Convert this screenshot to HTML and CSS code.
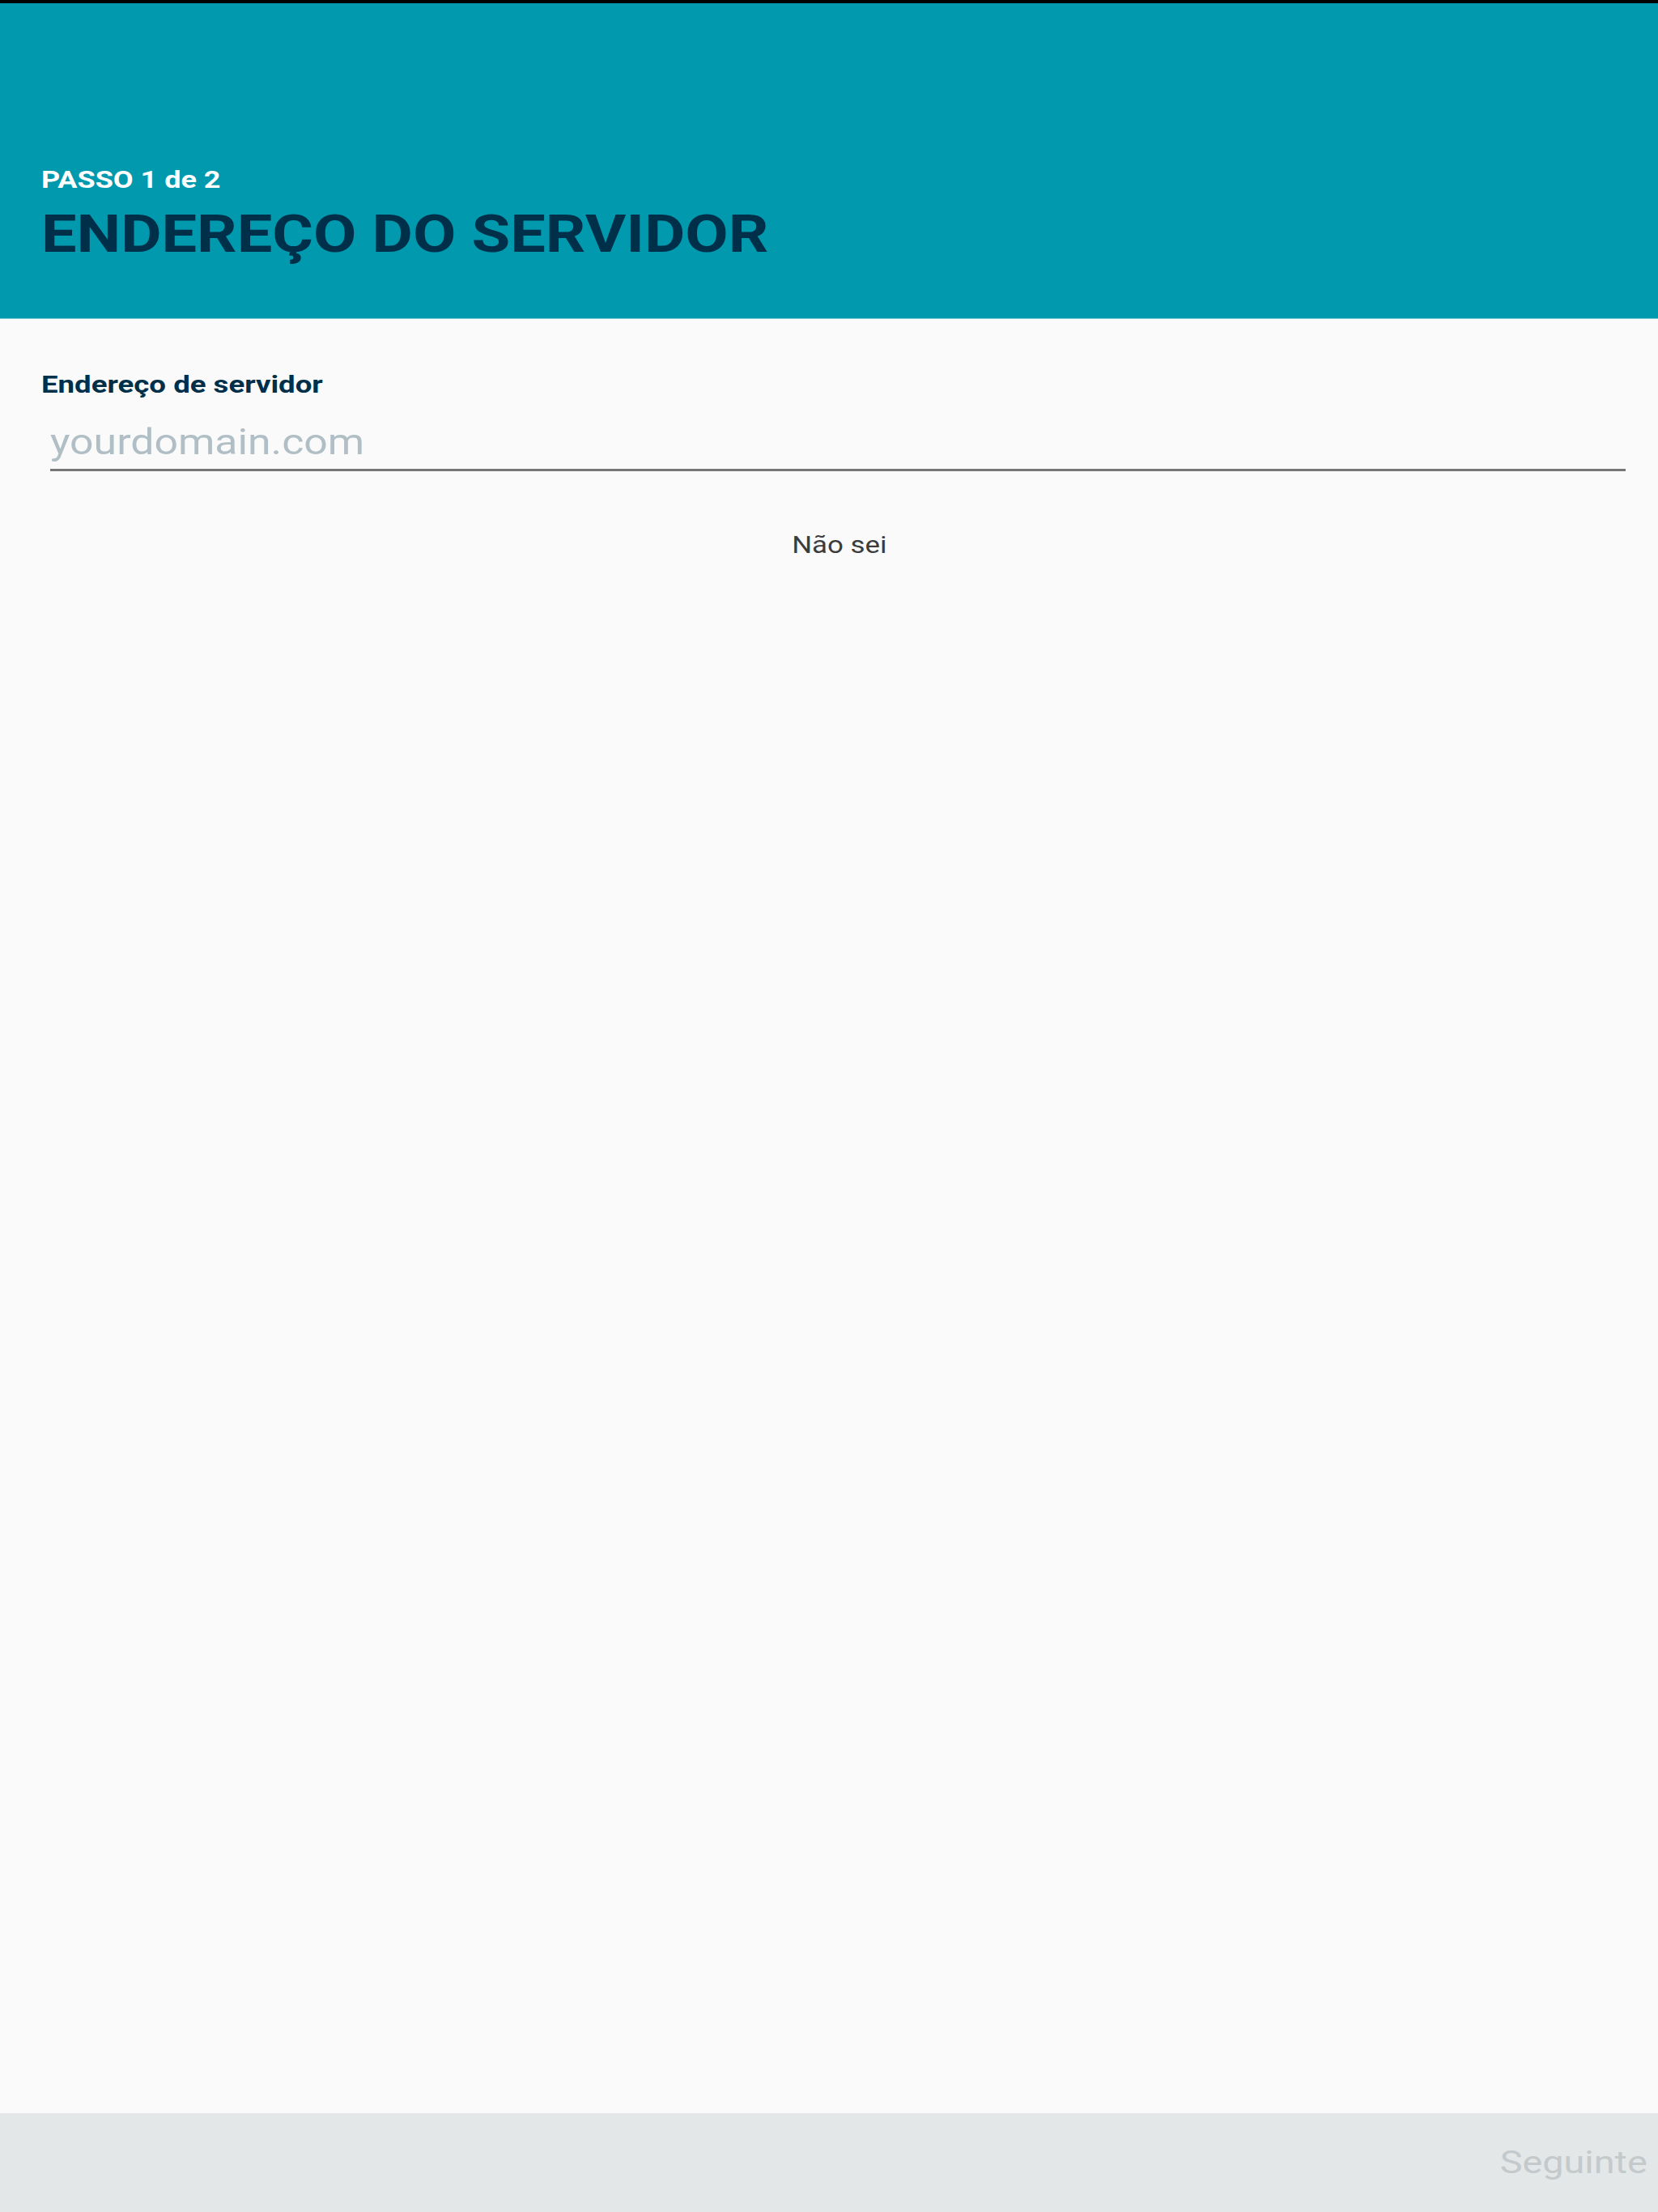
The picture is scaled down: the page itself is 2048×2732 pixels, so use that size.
FILE: index.html
```html
<!DOCTYPE html>
<html lang="pt">
<head>
<meta charset="utf-8">
<title>Endereço do servidor</title>
<link rel="stylesheet" href="styles.css">
</head>
<body>
<div class="screen">
  <header class="header">
    <div class="step"><span class="wide">PASSO 1 de 2</span></div>
    <h1 class="title"><span class="wide">ENDEREÇO DO SERVIDOR</span></h1>
  </header>
  <main class="content">
    <label class="label" for="server"><span class="wide">Endereço de servidor</span></label>
    <div class="field">
      <input id="server" class="input" type="text" placeholder="yourdomain.com">
    </div>
    <div class="help"><span class="wide center">Não sei</span></div>
  </main>
  <footer class="footer">
    <span class="next wide right">Seguinte</span>
  </footer>
</div>
</body>
</html>
```
FILE: styles.css
```css
html, body {
  margin: 0;
  padding: 0;
}
body {
  background: #fafafa;
  font-family: Roboto, "Liberation Sans", sans-serif;
}
.screen {
  display: flex;
  flex-direction: column;
  min-height: 2732px;
}
.wide {
  display: inline-block;
  transform: scaleX(1.2);
  transform-origin: left center;
  white-space: nowrap;
}
.wide.center {
  transform-origin: center center;
}
.wide.right {
  transform-origin: right center;
}
.header {
  background: #0099ad;
  border-top: 4px solid #000;
  border-bottom: 1px solid #7fcbd5;
  padding: 200px 50px 65px 51px;
}
.step {
  color: #ffffff;
  font-weight: 700;
  font-size: 30px;
  line-height: 36px;
}
.title {
  margin: 12px 0 0;
  color: #002f4a;
  font-weight: 700;
  font-size: 64px;
  line-height: 76px;
}
.title .wide {
  transform: scaleX(1.21);
}
.content {
  flex: 1;
  display: flex;
  flex-direction: column;
  padding: 64px 26px 0 51px;
}
.label {
  display: block;
  color: #002f4a;
  font-weight: 700;
  font-size: 30px;
  line-height: 34px;
}
.label .wide {
  transform: scaleX(1.22);
}
.field {
  margin: 26px 14px 0 11px;
  padding-bottom: 5px;
  border-bottom: 3px solid #767676;
}
.input {
  display: block;
  width: calc(100% / 1.15);
  margin: 0;
  padding: 0;
  border: 0;
  outline: none;
  background: transparent;
  font-family: Roboto, "Liberation Sans", sans-serif;
  font-size: 45px;
  line-height: 56px;
  height: 56px;
  color: #333;
  transform: scaleX(1.15);
  transform-origin: left center;
}
.input::placeholder {
  color: #b0bec5;
  opacity: 1;
}
.help {
  margin-top: 74px;
  text-align: center;
  color: #3c3c3c;
  font-size: 29px;
  line-height: 34px;
}
.footer {
  height: 122px;
  background: #e3e7e8;
  display: flex;
  align-items: center;
  justify-content: flex-end;
  padding-right: 13px;
}
.next {
  color: #c4c9cb;
  font-size: 39px;
  line-height: 48px;
}
```
